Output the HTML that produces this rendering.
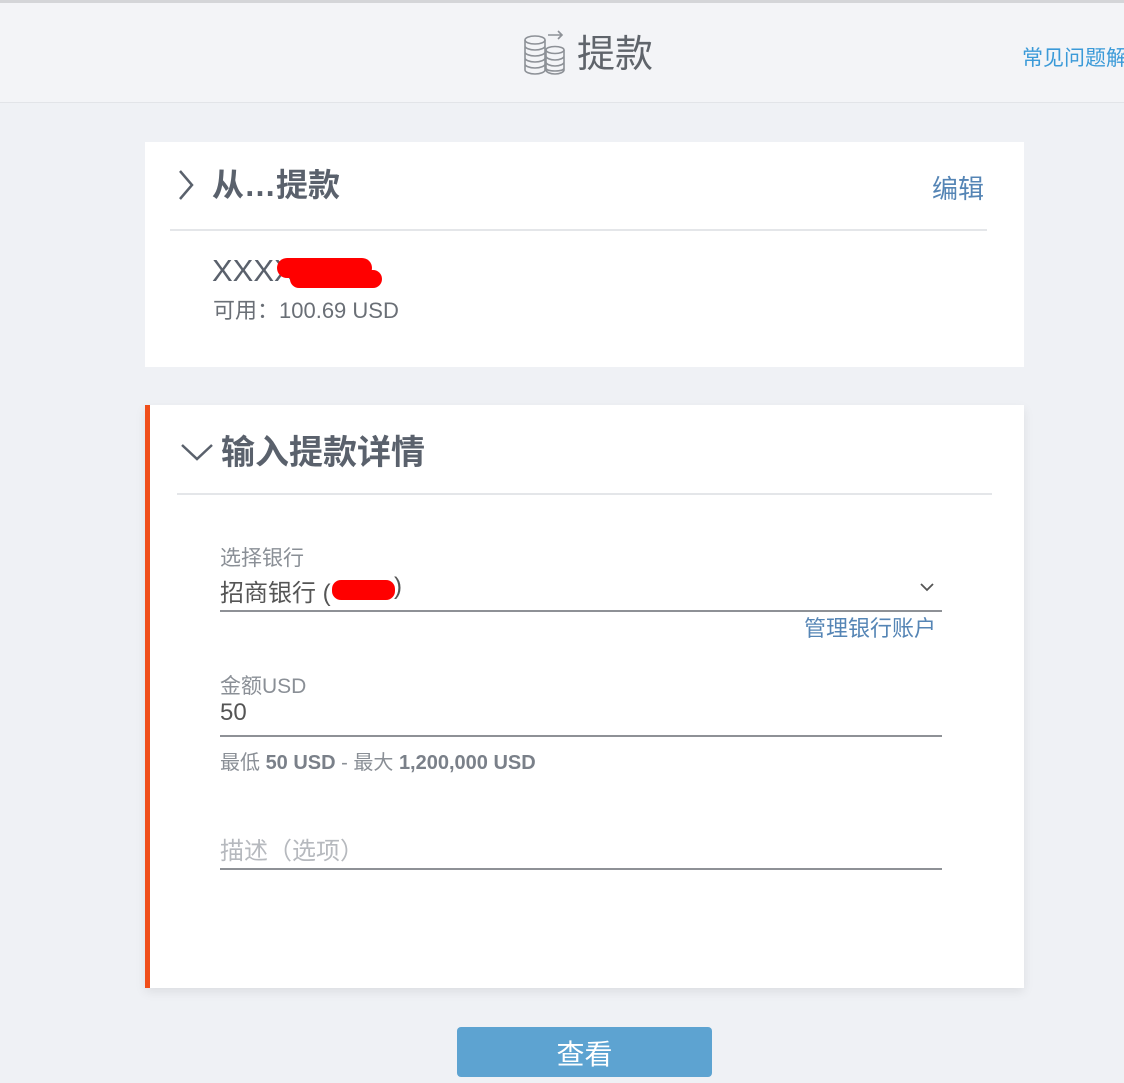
<!DOCTYPE html>
<html><head><meta charset="utf-8">
<style>
*{margin:0;padding:0;box-sizing:border-box}
html,body{width:1124px;height:1067px;overflow:hidden;background:#eff1f5;font-family:"Liberation Sans","Noto Sans CJK SC",sans-serif;color:#555c66}
.top{position:absolute;left:0;top:0;width:1124px;height:103px;background:#f3f4f7;border-top:3px solid #d4d5d8;border-bottom:1px solid #e2e4e8}
.title{position:absolute;left:577px;top:29px;font-size:38px;color:#5f646b;line-height:46px}
.faq{position:absolute;left:1022px;top:39px;font-size:21px;color:#3b9ad8;white-space:nowrap}
.card{position:absolute;background:#fff}
.c1{left:145px;top:142px;width:879px;height:225px}
.c2{left:145px;top:405px;width:879px;height:583px;border-left:5px solid #f04e1a;box-shadow:0 4px 10px rgba(0,0,0,0.08)}
.h{position:absolute;font-size:32px;font-weight:bold;color:#5a616c;line-height:40px}
.hr{position:absolute;height:2px;background:#e4e6e9}
.lbl{position:absolute;font-size:21px;color:#8a8f96}
.val{position:absolute;font-size:24px;color:#555}
.line{position:absolute;left:70px;width:722px;height:2px;background:#8e9196}
.btn{position:absolute;left:457px;top:1027px;width:255px;height:50px;background:#5da3d1;border-radius:4px;color:#fff;font-size:28px;text-align:center;line-height:56px}
</style></head><body>
<div class="top">
<svg style="position:absolute;left:522px;top:24px" width="46" height="50" viewBox="0 0 46 50" fill="none" stroke="#8d9197" stroke-width="1.6">
<path d="M26 8h14M36 4l4 4-4 4"/>
<ellipse cx="13" cy="13" rx="10" ry="4"/>
<path d="M3 13v30c0 2 4.5 4 10 4s10-2 10-4V13M3 19c0 2 4.5 4 10 4s10-2 10-4M3 25c0 2 4.5 4 10 4s10-2 10-4M3 31c0 2 4.5 4 10 4s10-2 10-4M3 37c0 2 4.5 4 10 4s10-2 10-4"/>
<ellipse cx="33" cy="23" rx="9" ry="3.5"/>
<path d="M24 23v20c0 2 4 4 9 4s9-2 9-4V23M24 29c0 2 4 4 9 4s9-2 9-4M24 35c0 2 4 4 9 4s9-2 9-4M24 41c0 2 4 3 9 3s9-1 9-3"/>
</svg>
<div class="title">提款</div>
<div class="faq">常见问题解答</div>
</div>

<div class="card c1">
<svg style="position:absolute;left:32px;top:27px" width="18" height="32" viewBox="0 0 18 32"><path d="M3 2l12 14L3 30" fill="none" stroke="#5a616c" stroke-width="2.5"/></svg>
<div class="h" style="left:67px;top:23px">从…提款</div>
<div style="position:absolute;left:787px;top:27px;font-size:26px;color:#5585b5">编辑</div>
<div class="hr" style="left:25px;top:87px;width:817px"></div>
<div class="val" style="left:67px;top:111px;font-size:31px;color:#5a616c">XXXX</div>
<div style="position:absolute;left:132px;top:116px;width:95px;height:20px;background:#f00;border-radius:10px"></div>
<div style="position:absolute;left:145px;top:128px;width:92px;height:18px;background:#f00;border-radius:9px"></div>
<div class="lbl" style="left:68px;top:151px;color:#6a6f76;font-size:22px">可用：100.69 USD</div>
</div>

<div class="card c2">
<svg style="position:absolute;left:30px;top:37px" width="34" height="20" viewBox="0 0 34 20"><path d="M2 3l15 14L32 3" fill="none" stroke="#5a616c" stroke-width="2.5"/></svg>
<div class="h" style="left:71px;top:28px;font-size:34px">输入提款详情</div>
<div class="hr" style="left:27px;top:88px;width:815px"></div>
<div class="lbl" style="left:70px;top:137px">选择银行</div>
<div class="val" style="left:70px;top:168px">招商银行 (</div>
<div style="position:absolute;left:182px;top:175px;width:63px;height:20px;background:#f00;border-radius:9px"></div>
<div class="val" style="left:244px;top:168px">)</div>
<svg style="position:absolute;left:770px;top:177px" width="14" height="10" viewBox="0 0 14 10"><path d="M1 2l6 6 6-6" fill="none" stroke="#555" stroke-width="1.8"/></svg>
<div class="line" style="top:205px"></div>
<div style="position:absolute;left:654px;top:206px;font-size:22px;color:#5585b5">管理银行账户</div>
<div class="lbl" style="left:70px;top:265px">金额USD</div>
<div class="val" style="left:70px;top:294px">50</div>
<div class="line" style="top:330px"></div>
<div class="lbl" style="left:70px;top:341px;font-size:20px">最低 <b style="color:#7a8089">50 USD</b> - 最大 <b style="color:#7a8089">1,200,000 USD</b></div>
<div class="val" style="left:70px;top:426px;color:#b6b9be">描述（选项）</div>
<div class="line" style="top:463px"></div>
</div>

<div class="btn">查看</div>
</body></html>
